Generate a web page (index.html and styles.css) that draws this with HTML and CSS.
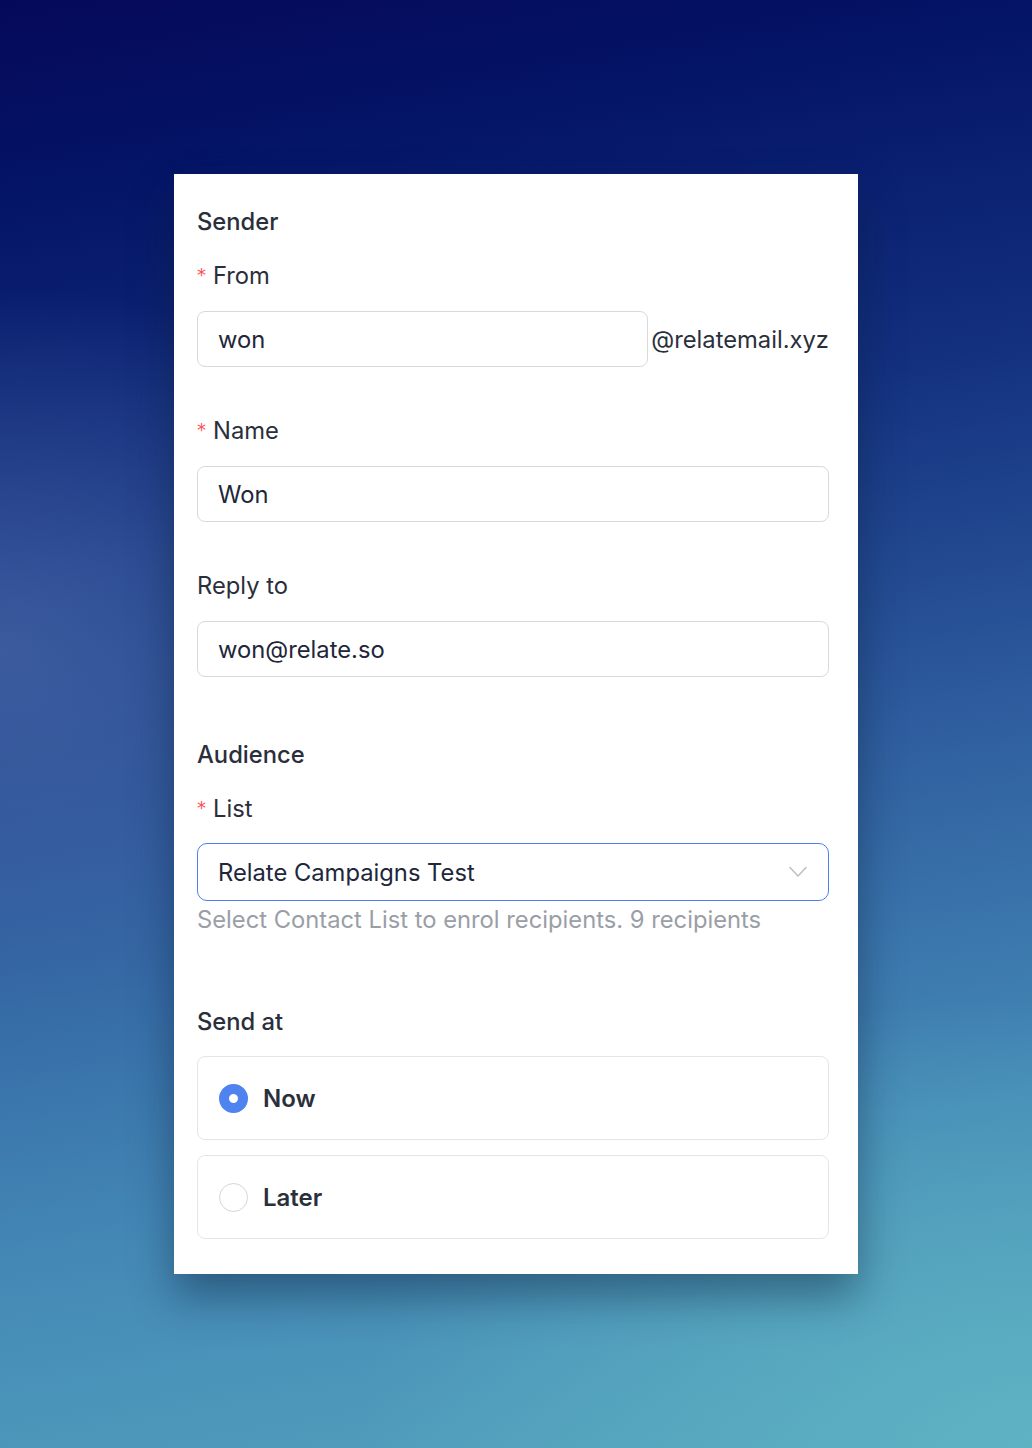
FILE: index.html
```html
<!DOCTYPE html>
<html lang="en">
<head>
<meta charset="utf-8">
<title>Campaign settings</title>
<link rel="stylesheet" href="styles.css">
</head>
<body>
<div class="bg">
  <form class="card">
    <h2 class="section-title">Sender</h2>

    <div class="item">
      <label class="label"><span class="req">*</span>From</label>
      <div class="addon-row">
        <div class="input grow">won</div>
        <span class="suffix">@relatemail.xyz</span>
      </div>
    </div>

    <div class="item">
      <label class="label"><span class="req">*</span>Name</label>
      <div class="input">Won</div>
    </div>

    <div class="item">
      <label class="label">Reply to</label>
      <div class="input">won@relate.so</div>
    </div>

    <h2 class="section-title spaced">Audience</h2>

    <div class="item item-help">
      <label class="label label-tight"><span class="req">*</span>List</label>
      <div class="select">
        <span>Relate Campaigns Test</span>
        <svg class="chev" width="18" height="12" viewBox="0 0 18 12" fill="none"><path d="M1 1.5 L9 10 L17 1.5" stroke="#bfbfbf" stroke-width="1.5" stroke-linecap="round" stroke-linejoin="round"/></svg>
      </div>
      <div class="help">Select Contact List to enrol recipients. 9 recipients</div>
    </div>

    <h2 class="section-title send">Send at</h2>

    <div class="radio-group">
      <div class="radio-card">
        <span class="radio checked"></span>
        <span class="radio-text">Now</span>
      </div>
      <div class="radio-card">
        <span class="radio"></span>
        <span class="radio-text">Later</span>
      </div>
    </div>
  </form>
</div>
</body>
</html>
```

FILE: styles.css
```css
* { box-sizing: border-box; }
html, body { margin: 0; padding: 0; }
body {
  font-family: Inter, "Noto Sans", "Liberation Sans", sans-serif;
  color: #2b2f3c;
}
.bg {
  min-height: 1448px;
  padding-top: 174px;
  padding-bottom: 174px;
  background:
    radial-gradient(ellipse 700px 520px at 0% 45%, rgba(70, 100, 165, 0.75), rgba(70, 100, 165, 0) 70%),
    radial-gradient(ellipse 900px 600px at 100% 100%, rgba(95, 180, 195, 0.9), rgba(95, 180, 195, 0) 75%),
    linear-gradient(170deg, #06095a 0%, #041466 12%, #13307f 32%, #2f5e9f 55%, #4489b6 78%, #55a4be 100%);
}
.card {
  width: 684px;
  margin: 0 auto;
  background: #fff;
  padding: 31px 29px 35px 23px;
  box-shadow: 0 22px 40px rgba(10, 30, 60, 0.45);
}
.section-title {
  margin: 0 0 22px;
  height: 32px;
  padding-top: 1px;
  font-size: 23.75px;
  line-height: 32px;
  font-weight: 500;
  color: #2b2f3c;
}
.section-title.spaced { margin-top: 61px; }
.section-title.send { margin-top: 69px; margin-bottom: 19px; }
.item { margin-bottom: 47px; }
.item-help { margin-bottom: 0; }
.label {
  display: block;
  font-size: 23.75px;
  line-height: 32px;
  height: 32px;
  padding-top: 1px;
  margin-bottom: 20px;
  color: #2b2f3c;
}
.label-tight { margin-bottom: 19px; }
.req {
  color: #ff4d4f;
  font-size: 18px;
  line-height: 0;
  margin-right: 7px;
  font-family: "DejaVu Sans", sans-serif;
  position: relative;
  top: -3px;
}
.addon-row {
  display: flex;
  align-items: center;
}
.grow { flex: 1; }
.suffix {
  margin-left: 3px;
  font-size: 23.75px;
  color: #2b2f3c;
}
.input {
  height: 56px;
  border: 1px solid #d9d9d9;
  border-radius: 8px;
  padding: 0 20px;
  display: flex;
  align-items: center;
  font-size: 23.75px;
  color: #22263a;
}
.select {
  height: 58px;
  border: 1px solid #4d7fef;
  border-radius: 10px;
  padding: 0 20px;
  display: flex;
  align-items: center;
  justify-content: space-between;
  font-size: 23.75px;
  color: #22263a;
}
.chev { margin-right: 1px; }
.help {
  font-size: 23.75px;
  line-height: 32px;
  margin-top: 3px;
  color: #9a9ea6;
}
.radio-group {
  display: flex;
  flex-direction: column;
  gap: 15px;
}
.radio-card {
  height: 84px;
  border: 1px solid #e3e6ec;
  border-radius: 8px;
  padding-left: 21px;
  display: flex;
  align-items: center;
  gap: 15px;
}
.radio {
  width: 29px;
  height: 29px;
  border-radius: 50%;
  border: 1px solid #d3d5da;
  background: #fff;
  flex: none;
}
.radio.checked {
  border: 10px solid #4f83ef;
  background: #fff;
}
.radio-text {
  font-size: 24px;
  font-weight: 600;
  color: #2b2f3c;
}
```
